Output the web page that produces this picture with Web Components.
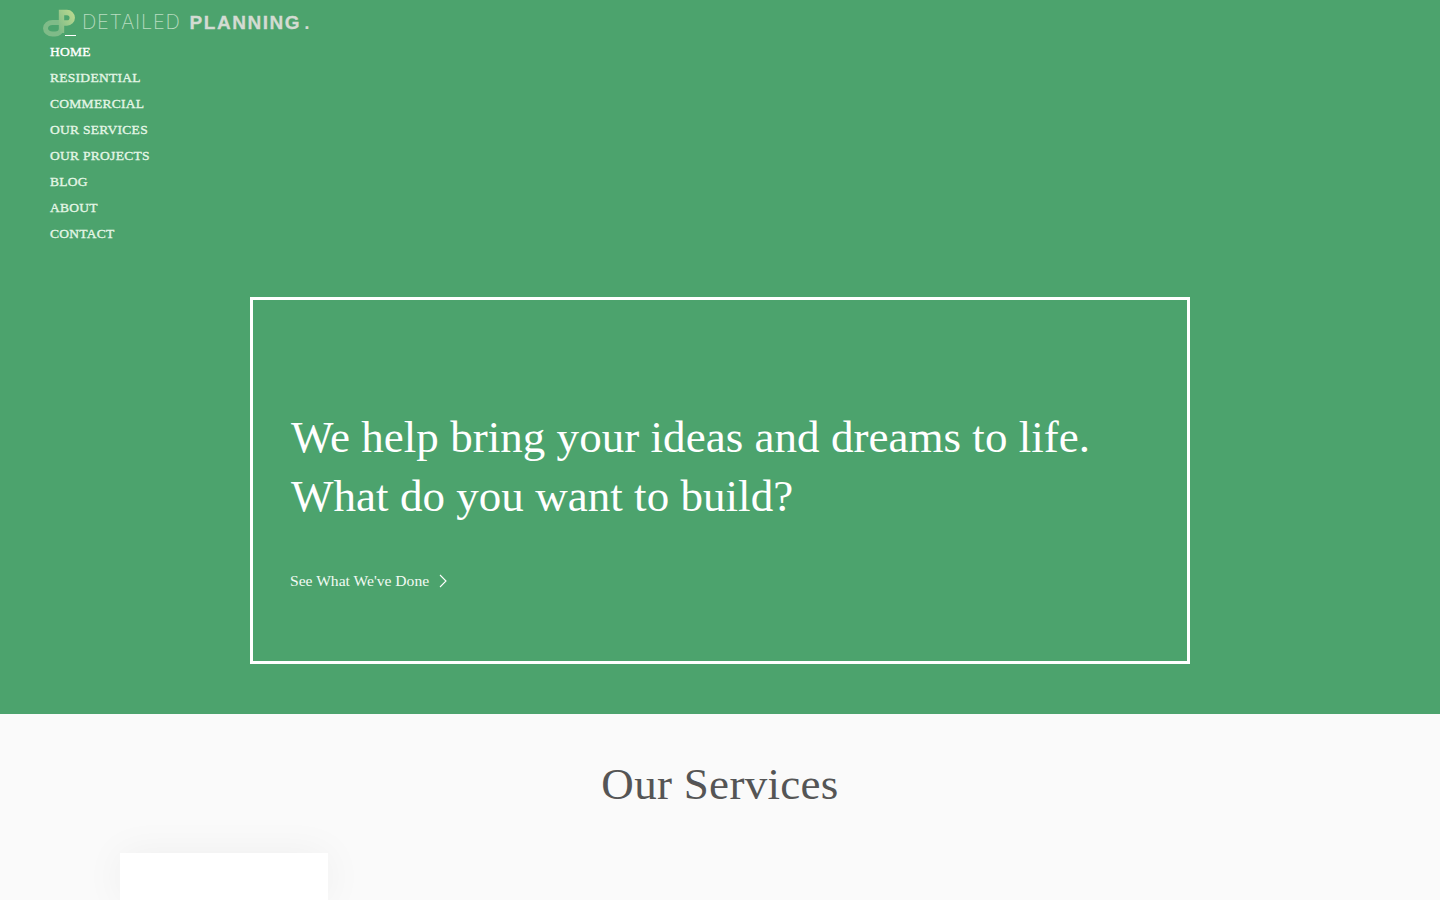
<!DOCTYPE html>
<html lang="en">
<head>
<meta charset="utf-8">
<title>Detailed Planning</title>
<style>
  html, body { margin: 0; padding: 0; height: 900px; overflow: hidden; background: #fafafa; }
  body { font-family: "Liberation Serif", serif; }
</style>
</head>
<body>
<site-hero>
  <site-logo slot="logo"></site-logo>
  <site-nav slot="nav">
    <a href="#" class="on">HOME</a>
    <a href="#">RESIDENTIAL</a>
    <a href="#">COMMERCIAL</a>
    <a href="#">OUR SERVICES</a>
    <a href="#">OUR PROJECTS</a>
    <a href="#">BLOG</a>
    <a href="#">ABOUT</a>
    <a href="#">CONTACT</a>
  </site-nav>
  <hero-box slot="box">
    <span slot="line">We help bring your ideas and dreams to life.</span>
    <span slot="line">What do you want to build?</span>
    <span slot="link">See What We've Done</span>
  </hero-box>
</site-hero>
<services-section>
  <service-card></service-card>
</services-section>

<script>
// Small helper, every element just stamps its html in an open shadow root
class BaseEl extends HTMLElement {
  constructor() {
    super();
    this.attachShadow({ mode: "open" }).innerHTML = this.constructor.html;
  }
}

class SiteHero extends BaseEl {
  static html = `
    <style>
      :host { display: block; height: 714px; background: #4ca36d; box-sizing: border-box; padding-top: 6px; }
      .box { margin-top: 50px; display: flex; justify-content: center; }
    </style>
    <slot name="logo"></slot>
    <slot name="nav"></slot>
    <div class="box"><slot name="box"></slot></div>`;
}

class SiteLogo extends BaseEl {
  static html = `
    <style>
      :host { display: flex; align-items: center; height: 33px; padding-left: 43px; position: relative; }
      svg { display: block; flex: none; filter: blur(.4px); }
      .txt { margin-left: 6px; font: 20px/33px Inter, "Liberation Sans", sans-serif; white-space: nowrap; }
      .thin { font-weight: 200; color: #b9dcc0; letter-spacing: .75px; }
      .bold { font-family: "Liberation Sans", sans-serif; font-weight: 700; font-size: 19px; color: #d3dbd2; letter-spacing: 1.55px; margin-left: 9px; -webkit-text-stroke: .3px currentColor; }
      .dot { margin-left: 3px; font-family: "Liberation Sans", sans-serif; font-weight: 700; font-size: 19px; color: #d3dbd2; }
      .bar { position: absolute; left: 65px; top: 29px; width: 11px; height: 1px; background: #fff; }
    </style>
    <svg width="33" height="28" viewBox="0 0 33 28" fill="none">
      <defs>
        <linearGradient id="g" x1="0" y1="1" x2="1" y2="0">
          <stop offset="0" stop-color="#7dba87"/>
          <stop offset="1" stop-color="#b6d78f"/>
        </linearGradient>
      </defs>
      <path d="M19 13.5H9.5a7 5.75 0 0 0 0 11.5h2.5a6.5 5.5 0 0 0 6.5-5" stroke="#7fbb88" stroke-width="5"/>
      <path d="M18.5 24V3.5H24a5.2 5.2 0 0 1 0 10.5H17" stroke="url(#g)" stroke-width="5.4"/>
    </svg>
    <div class="txt"><span class="thin">DETAILED</span><span class="bold">PLANNING</span><span class="dot">.</span></div>
    <i class="bar"></i>`;
}

class SiteNav extends BaseEl {
  static html = `
    <style>
      :host { display: block; padding: 0 0 0 50px; }
      nav { display: flex; flex-direction: column; align-items: flex-start; }
      ::slotted(a) {
        display: block; height: 26px; line-height: 26px; font-size: 13.5px; letter-spacing: .28px; color: #e4f6e6;
        text-decoration: none; -webkit-text-stroke: .35px currentColor;
      }
      ::slotted(a.on) { color: #fff; }
    </style>
    <nav><slot></slot></nav>`;
}

class HeroBox extends BaseEl {
  static html = `
    <style>
      :host { display: block; width: 940px; height: 367px; box-sizing: border-box; border: 3px solid #fff; padding: 108px 37px 0; color: #fff; }
      h1 { margin: 0; font-weight: 400; font-size: 45px; line-height: 59px; letter-spacing: .04px; display: flex; flex-direction: column; padding-left: 1px; }
      .link { margin-top: 45px; display: flex; align-items: center; font-size: 15.6px; line-height: 20px; color: #f1faf3; }
      svg { margin-left: 10px; display: block; }
    </style>
    <h1><slot name="line"></slot></h1>
    <div class="link"><slot name="link"></slot>
      <svg width="8" height="14" viewBox="0 0 8 14" fill="none"><path d="M1 1l6 6-6 6" stroke="#fff" stroke-width="1.1"/></svg>
    </div>`;
}

class ServicesSection extends BaseEl {
  static html = `
    <style>
      :host { display: block; background: #fafafa; padding: 41px 120px 0; }
      h2 { margin: 0; text-align: center; font-weight: 400; font-size: 45px; line-height: 58px; color: #555; letter-spacing: .3px; }
      .cards { margin-top: 40px; display: flex; }
    </style>
    <h2>Our Services</h2>
    <div class="cards"><slot></slot></div>`;
}

class ServiceCard extends BaseEl {
  static html = `
    <style>
      :host { display: block; width: 208px; height: 47px; background: #fff; box-shadow: 0 0 40px rgba(0,0,0,.05); }
    </style>`;
}

customElements.define("site-hero", SiteHero);
customElements.define("site-logo", SiteLogo);
customElements.define("site-nav", SiteNav);
customElements.define("hero-box", HeroBox);
customElements.define("services-section", ServicesSection);
customElements.define("service-card", ServiceCard);
</script>
</body>
</html>
